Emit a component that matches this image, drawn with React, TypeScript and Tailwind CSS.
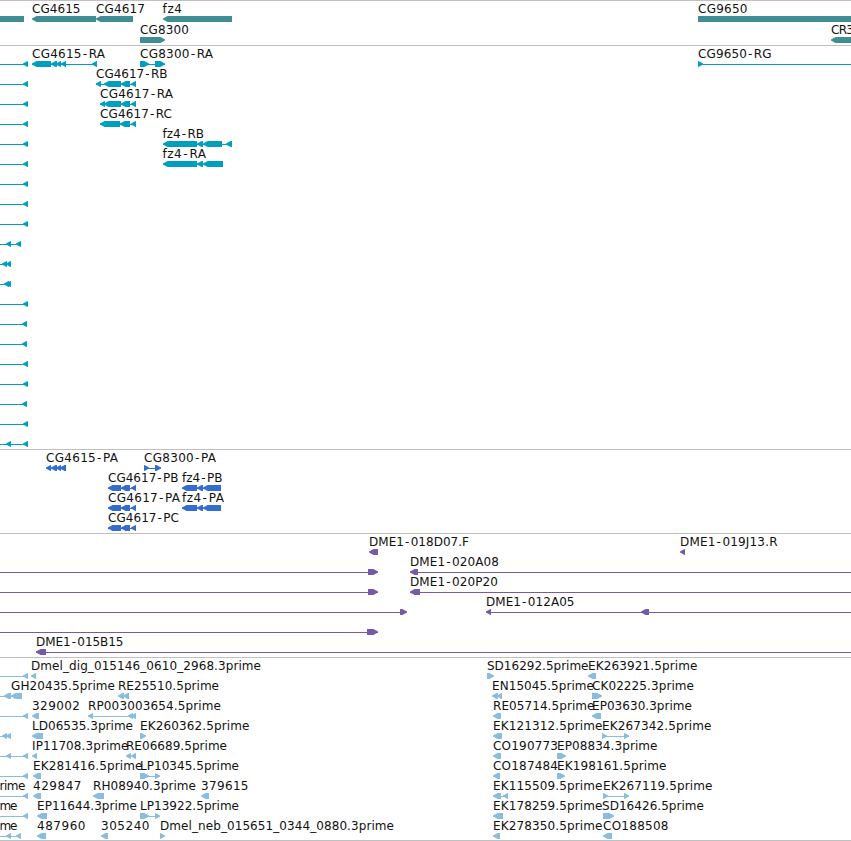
type Label = [x: number, text: string, end?: number];
type Row = { labels?: Label[]; lines?: [number, number][]; left?: [number, number][]; right?: [number, number][]; bars?: [number, number][] };
type Track = { name: string; color: string; rowClass: string; padClass: string; rows: Row[] };

const edge = (end = 28): Row => ({ lines: [[0, end]], left: [[end - 5, end]] });

const genes: Row[] = [
  { labels: [[32, 'CG4615', 80.5], [96, 'CG4617', 145], [162.5, 'fz4', 182], [698, 'CG9650', 747.5]], bars: [[0, 24], [698, 851]], left: [[32, 96], [96, 133], [163, 232]] },
  { labels: [[140, 'CG8300', 189], [831, 'CR3', 854]], left: [[831, 870]], right: [[140, 165]] },
];

const transcripts: Row[] = [
  { labels: [[32, 'CG4615-RA', 105], [140, 'CG8300-RA', 213], [698, 'CG9650-RG', 771.5]], lines: [[0, 28], [32, 97], [140, 165], [698, 851]], left: [[23, 28], [32, 51], [51, 57], [56, 61], [61, 66], [92, 97]], right: [[140, 149], [155, 165], [698, 703]] },
  { labels: [[96, 'CG4617-RB', 167.5]], lines: [[0, 28], [96, 136]], left: [[23, 28], [96, 101], [104, 121], [121, 130], [131, 136]] },
  { labels: [[100, 'CG4617-RA', 173]], lines: [[0, 28], [100, 136]], left: [[23, 28], [100, 105], [104, 121], [121, 130], [131, 136]] },
  { labels: [[100, 'CG4617-RC', 172]], lines: [[0, 28], [100, 136]], left: [[23, 28], [100, 120], [120, 130], [131, 136]] },
  { labels: [[162.5, 'fz4-RB', 204]], lines: [[0, 28], [163, 232]], left: [[23, 28], [163, 197], [197, 203], [203, 222], [226, 232]] },
  { labels: [[162.5, 'fz4-RA', 206]], lines: [[0, 28], [163, 223]], left: [[23, 28], [163, 197], [197, 203], [203, 223]] },
  edge(), edge(), edge(),
  { lines: [[0, 21]], left: [[6, 11], [16, 21]] },
  { lines: [[0, 11]], left: [[2, 7], [6, 11]] },
  { lines: [[0, 11]], left: [[4, 9], [6, 11]] },
  edge(), edge(27), edge(27), edge(), edge(), edge(27), edge(),
  { lines: [[0, 28]], left: [[6, 11], [23, 28]] },
];

const proteins: Row[] = [
  { labels: [[46, 'CG4615-PA', 118], [144, 'CG8300-PA', 216]], lines: [[46, 66], [144, 161]], left: [[46, 51], [51, 57], [56, 61], [60, 66]], right: [[144, 149], [155, 161]] },
  { labels: [[108, 'CG4617-PB', 178.5], [182, 'fz4-PB', 222.5]], lines: [[108, 136], [182, 221]], left: [[108, 121], [121, 130], [131, 136], [182, 197], [197, 203], [203, 221]] },
  { labels: [[108, 'CG4617-PA', 180], [182, 'fz4-PA', 224]], lines: [[108, 136], [182, 221]], left: [[108, 121], [121, 130], [131, 136], [182, 197], [197, 203], [203, 221]] },
  { labels: [[108, 'CG4617-PC', 179]], lines: [[108, 136]], left: [[108, 121], [121, 130], [131, 136]] },
];

const bacEnds: Row[] = [
  { labels: [[369, 'DME1-018D07.F', 469], [680, 'DME1-019J13.R', 777.5]], left: [[369, 378], [680, 685]] },
  { labels: [[410, 'DME1-020A08', 499]], lines: [[0, 378], [410, 851]], left: [[410, 418]], right: [[368, 378]] },
  { labels: [[410, 'DME1-020P20', 498]], lines: [[0, 378], [410, 851]], left: [[410, 420]], right: [[368, 378]] },
  { labels: [[486, 'DME1-012A05', 574.5]], lines: [[0, 407], [486, 851]], left: [[486, 491], [641, 649]], right: [[400, 407]] },
  { lines: [[0, 378]], right: [[367, 378]] },
  { labels: [[36, 'DME1-015B15', 123.5]], lines: [[36, 851]], left: [[36, 46]] },
];

const ests: Row[] = [
  { labels: [[31, 'Dmel_dig_015146_0610_2968.3prime', 261], [487, 'SD16292.5prime', 588.5], [588, 'EK263921.5prime', 697.5]], lines: [[0, 28]], left: [[23, 28], [31, 36], [588, 596]], right: [[487, 494]] },
  { labels: [[11, 'GH20435.5prime', 115], [118, 'RE25510.5prime', 219], [492, 'EN15045.5prime', 594], [592, 'CK02225.3prime', 694]], lines: [[0, 22]], left: [[4, 11], [11, 22], [118, 124], [123, 129], [492, 498], [497, 502]], right: [[592, 602]] },
  { labels: [[32, '329002', 80], [88, 'RP003003654.5prime', 221], [493, 'RE05714.5prime', 594.5], [592, 'EP03630.3prime', 692]], lines: [[0, 28], [88, 136]], left: [[23, 28], [32, 39], [88, 93], [128, 133], [131, 136], [493, 501], [592, 601]] },
  { labels: [[32, 'LD06535.3prime', 133], [140, 'EK260362.5prime', 249.5], [493, 'EK121312.5prime', 602.5], [602, 'EK267342.5prime', 711.5]], lines: [[0, 11], [602, 629]], left: [[2, 7], [6, 11], [32, 43], [493, 502]], right: [[140, 146], [602, 607], [624, 629]] },
  { labels: [[32, 'IP11708.3prime', 128.5], [126, 'RE06689.5prime', 227], [493, 'CO190773', 558], [557, 'EP08834.3prime', 657.5]], lines: [[0, 28]], left: [[6, 11], [23, 28], [32, 37], [126, 131], [131, 136], [493, 501]], right: [[557, 566]] },
  { labels: [[33, 'EK281416.5prime', 142.5], [140, 'LP10345.5prime', 239], [493, 'CO187484', 558], [557, 'EK198161.5prime', 666.5]], lines: [[0, 28], [140, 160]], left: [[23, 28], [33, 41], [493, 500]], right: [[140, 149], [155, 160], [557, 565]] },
  { labels: [[-0.5, 'rime', 25.5], [33, '429847', 81.5], [93, 'RH08940.3prime', 196], [201, '379615', 248.5], [493, 'EK115509.5prime', 602.5], [603, 'EK267119.5prime', 712.5]], lines: [[0, 28], [493, 508], [603, 629]], left: [[23, 28], [33, 41], [93, 104], [201, 209], [493, 501], [503, 508]], right: [[603, 608], [624, 629]] },
  { labels: [[-0.5, 'me', 17.5], [37, 'EP11644.3prime', 137], [140, 'LP13922.5prime', 239], [493, 'EK178259.5prime', 602.5], [602, 'SD16426.5prime', 704]], lines: [[0, 28], [140, 160]], left: [[23, 28], [37, 47], [493, 503]], right: [[140, 149], [155, 160], [603, 614]] },
  { labels: [[-0.5, 'me', 17.5], [37, '487960', 85.5], [101, '305240', 149.5], [160, 'Dmel_neb_015651_0344_0880.3prime', 394], [493, 'EK278350.5prime', 602.5], [603, 'CO188508', 668.5]], lines: [[0, 21]], left: [[6, 11], [16, 21], [37, 46], [101, 108], [493, 500], [603, 612]], right: [[160, 165]] },
];

const tracks: Track[] = [
  { name: 'genes', color: '#3f8e93', rowClass: 'h-[21px]', padClass: 'pb-[2px]', rows: genes },
  { name: 'transcripts', color: '#009fc0', rowClass: 'h-5', padClass: 'pb-[3px]', rows: transcripts },
  { name: 'proteins', color: '#336dcd', rowClass: 'h-5', padClass: 'pb-[3px]', rows: proteins },
  { name: 'bacEnds', color: '#765aa7', rowClass: 'h-5', padClass: 'pb-[3px]', rows: bacEnds },
  { name: 'ests', color: '#88bde0', rowClass: 'h-5', padClass: 'pb-[2px]', rows: ests },
];

// Arrow-headed feature box, six pixels tall with a triangular head.
const leftArrow = ([a, b]: [number, number]) => `M${a} 17.4L${a + 4.6} 15H${b}V21H${a + 4.6}L${a} 18.6z`;
const rightArrow = ([a, b]: [number, number]) => `M${b} 17.4L${b - 4.6} 15H${a}V21H${b - 4.6}L${b} 18.6z`;

// Extra room on both sides of a hyphen.
const hyphenGaps = (text: string) => {
  const at = text.indexOf('-');
  return at < 0 ? undefined : [...text].map((_, i) => (i === at ? 1 : i === at + 1 ? 1.4 : 0)).join(' ');
};

function FeatureRow({ row, color, className }: { row: Row; color: string; className: string }) {
  return (
    <svg className={`block w-full overflow-visible ${className}`} fill={color}>
      {row.lines?.map(([a, b], i) => <rect key={i} x={a} y={18} width={b - a} height={1} />)}
      {row.bars?.map(([a, b], i) => <rect key={i} x={a} y={15} width={b - a} height={6} />)}
      {row.left?.map((s, i) => <path key={i} d={leftArrow(s)} />)}
      {row.right?.map((s, i) => <path key={i} d={rightArrow(s)} />)}
      {row.labels?.map(([x, text, end], i) => (
        <text key={i} x={x} y={12} dx={hyphenGaps(text)} textLength={end ? end - x : undefined} className="fill-[#111]">{text}</text>
      ))}
    </svg>
  );
}

export default function App() {
  return (
    <main className="flex h-[841px] w-[851px] flex-col overflow-hidden bg-white font-['DejaVu_Sans',sans-serif] text-[12px]">
      {tracks.map((t) => (
        <section key={t.name} className={`border-t border-[#c0c0c0] last:border-b ${t.padClass}`}>
          {t.rows.map((row, i) => <FeatureRow key={i} row={row} color={t.color} className={t.rowClass} />)}
        </section>
      ))}
    </main>
  );
}
